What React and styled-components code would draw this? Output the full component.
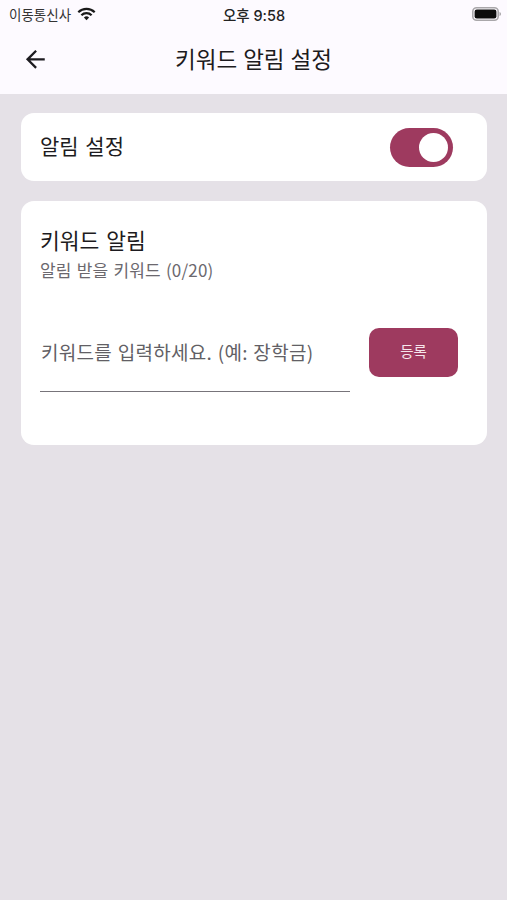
import styled, { createGlobalStyle } from "styled-components";

const GlobalStyle = createGlobalStyle`
  * {
    box-sizing: border-box;
  }
  body {
    margin: 0;
    background-color: #e5e1e7;
    font-family: "Noto Sans CJK KR", "Noto Sans", sans-serif;
  }
`;

const Page = styled.div`
  width: 507px;
  height: 900px;
  overflow: hidden;
  background-color: #e5e1e7;
`;

const Header = styled.header`
  height: 94px;
  background-color: #fdfaff;
`;

const StatusBar = styled.div`
  height: 28px;
  padding: 0 5px 0 9px;
  display: grid;
  grid-template-columns: 1fr auto 1fr;
  align-items: center;
  font-size: 13.5px;
  color: #333;
`;

const Carrier = styled.div`
  display: flex;
  align-items: center;
  gap: 6px;
`;

const Clock = styled.div`
  font-family: "Inter", "Noto Sans CJK KR", sans-serif;
  font-size: 14.5px;
  font-weight: 500;
  color: #222;
  margin-left: -3px;
`;

const Battery = styled.div`
  justify-self: end;
  display: flex;
  align-items: center;
`;

const NavBar = styled.div`
  position: relative;
  height: 62px;
  display: flex;
  align-items: center;
  justify-content: center;
  padding-bottom: 3px;
`;

const BackButton = styled.button`
  position: absolute;
  left: 24px;
  top: 19px;
  width: 24px;
  height: 24px;
  padding: 0;
  border: 0;
  background: none;
  display: flex;
`;

const Title = styled.h1`
  margin: 0;
  font-size: 22.5px;
  font-weight: 400;
  line-height: 30px;
  word-spacing: 1px;
  color: #1d1b20;
`;

const Content = styled.main`
  padding: 19px 20px 0 21px;
  display: flex;
  flex-direction: column;
  gap: 20px;
`;

const Card = styled.section`
  background-color: #fff;
  border-radius: 13px;
`;

const SettingRow = styled(Card)`
  height: 68px;
  padding: 0 34px 0 19px;
  display: flex;
  align-items: center;
  justify-content: space-between;
`;

const SettingLabel = styled.span`
  font-size: 21px;
  line-height: 28px;
  word-spacing: 2px;
  color: #1d1b20;
  margin-top: -4px;
`;

const Toggle = styled.div`
  width: 63px;
  height: 39px;
  padding: 0 5px;
  border-radius: 20px;
  background-color: #9e3a5f;
  display: flex;
  align-items: center;
  justify-content: ${({ $on }) => ($on ? "flex-end" : "flex-start")};
`;

const Thumb = styled.div`
  width: 29px;
  height: 29px;
  border-radius: 50%;
  background-color: #fff;
`;

const KeywordCard = styled(Card)`
  height: 244px;
  padding: 25px 29px 0 19px;
`;

const CardTitle = styled.h2`
  margin: 0;
  font-size: 21.5px;
  font-weight: 400;
  line-height: 28px;
  word-spacing: 2px;
  color: #1d1b20;
`;

const CardHint = styled.p`
  margin: 4px 0 0;
  font-size: 17px;
  line-height: 24px;
  word-spacing: 1px;
  letter-spacing: 0.2px;
  color: #6b686e;
`;

const FormRow = styled.div`
  margin-top: 46px;
  display: flex;
  align-items: flex-start;
  justify-content: space-between;
`;

const KeywordInput = styled.input`
  width: 310px;
  height: 64px;
  padding: 0 0 16px 1px;
  border: 0;
  border-bottom: 1px solid #77747a;
  border-radius: 0;
  outline: none;
  background: none;
  font-family: inherit;
  font-size: 19px;
  letter-spacing: 0.3px;
  word-spacing: 1px;
  color: #1d1b20;

  &::placeholder {
    color: #625f65;
    opacity: 1;
  }
`;

const SubmitButton = styled.button`
  width: 89px;
  height: 49px;
  padding: 0 0 5px;
  border: 0;
  border-radius: 10px;
  background-color: #9e3a5f;
  font-family: inherit;
  font-size: 14.5px;
  color: #f6e6ec;
`;

const WifiIcon = () => (
  <svg width="19" height="14" viewBox="0 0 19 14" fill="none" stroke="#1a1a1a" strokeWidth="2.2">
    <path d="M1.3 5.2a11.6 11.6 0 0 1 16.4 0" />
    <path d="M4.4 8.2a7.2 7.2 0 0 1 10.2 0" />
    <path d="M9.5 13.2 6.9 10.6a3.7 3.7 0 0 1 5.2 0Z" fill="#1a1a1a" stroke="none" />
  </svg>
);

const BatteryIcon = () => (
  <svg width="30" height="14" viewBox="0 0 30 14">
    <rect x="0.8" y="0.8" width="25.4" height="12.4" rx="3.8" fill="none" stroke="#a9a7aa" strokeWidth="1.6" />
    <rect x="2.6" y="2.6" width="21.8" height="8.8" rx="2.2" fill="#0c0c0c" />
    <path d="M27.5 5v4c.9-.3 1.5-1.1 1.5-2s-.6-1.700-1.500-2Z" fill="#a9a7aa" />
  </svg>
);

const BackIcon = () => (
  <svg width="24" height="24" viewBox="0 0 24 24" fill="#1d1b20">
    <path d="M22.500 10.700H6.500l7.300-7.300L12 1.600 1.600 12 12 22.400l1.800-1.800-7.300-7.300h16Z" transform="translate(0.500 1.500) scale(0.9)" />
  </svg>
);

export default function App() {
  return (
    <Page>
      <GlobalStyle />
      <Header>
        <StatusBar>
          <Carrier>
            이동통신사
            <WifiIcon />
          </Carrier>
          <Clock>오후 9:58</Clock>
          <Battery>
            <BatteryIcon />
          </Battery>
        </StatusBar>
        <NavBar>
          <BackButton aria-label="뒤로">
            <BackIcon />
          </BackButton>
          <Title>키워드 알림 설정</Title>
        </NavBar>
      </Header>
      <Content>
        <SettingRow>
          <SettingLabel>알림 설정</SettingLabel>
          <Toggle $on>
            <Thumb />
          </Toggle>
        </SettingRow>
        <KeywordCard>
          <CardTitle>키워드 알림</CardTitle>
          <CardHint>알림 받을 키워드 (0/20)</CardHint>
          <FormRow>
            <KeywordInput placeholder="키워드를 입력하세요. (예: 장학금)" />
            <SubmitButton>등록</SubmitButton>
          </FormRow>
        </KeywordCard>
      </Content>
    </Page>
  );
}
